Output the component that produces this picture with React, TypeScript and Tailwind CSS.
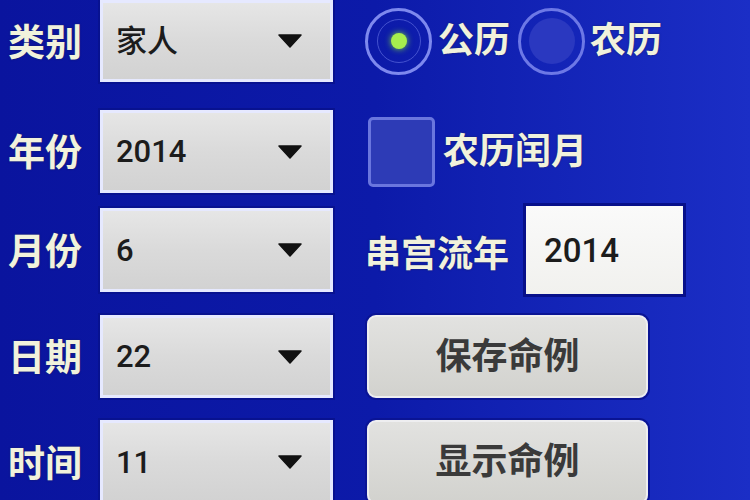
import React from 'react'

const cjk = { fontFamily: 'Roboto, "Noto Sans CJK SC", sans-serif' }

function Arrow() {
  return (
    <svg width="24" height="14" viewBox="0 0 24 14" className="shrink-0">
      <path d="M1 1 L23 1 L12 13 Z" fill="#111" stroke="#111" strokeWidth="1.5" strokeLinejoin="round" />
    </svg>
  )
}

function Spinner({ value }: { value: string }) {
  return (
    <div className="w-[233px] h-full flex items-center justify-between pl-[13px] pr-[28px] border-[3px] border-[#e6e9ff] bg-gradient-to-b from-[#e6e6e6] via-[#dadada] to-[#d2d2d2] shadow-[0_0_0_2px_#081290]">
      <span className="text-[31px] font-medium text-[#1c1c1c] leading-none" style={cjk}>{value}</span>
      <Arrow />
    </div>
  )
}

function Label({ text }: { text: string }) {
  return (
    <div className="w-[100px] pl-[8px] pt-[4px] text-[37px] font-bold text-[#f1f2dc] leading-none [text-shadow:0_0_2px_#1a2060]" style={cjk}>
      {text}
    </div>
  )
}

function Btn({ text }: { text: string }) {
  return (
    <div className="ml-[34px] w-[281px] h-full flex items-center justify-center rounded-[9px] border-2 border-[#eeeef0] bg-gradient-to-b from-[#e2e2e0] to-[#d2d2ce] shadow-[0_0_0_2px_#0a1494]">
      <span className="text-[36px] font-bold text-[#3a3a3a] leading-none" style={cjk}>{text}</span>
    </div>
  )
}

const lightText = 'text-[36px] font-bold text-[#f1f2dc] leading-none [text-shadow:0_0_2px_#1a2060]'

export default function App() {
  return (
    <div className="w-[750px] h-[500px] overflow-hidden bg-gradient-to-r from-[#0a149e] via-[#0c1aa9] to-[#1b2ec6]">
      {/* row 1 */}
      <div className="h-[82px] flex items-center">
        <Label text="类别" />
        <Spinner value="家人" />
        <div className="ml-[32px] flex items-center">
          <div className="w-[67px] h-[67px] rounded-full border-[3px] border-[#7e89ee] flex items-center justify-center">
            <div className="w-[44px] h-[44px] rounded-full border border-[#4452cf] flex items-center justify-center">
              <div className="w-[16px] h-[16px] rounded-full bg-[#a6ee4e] shadow-[0_0_6px_#7fd83a]" />
            </div>
          </div>
          <span className={`ml-[6px] ${lightText}`} style={cjk}>公历</span>
          <div className="ml-[8px] w-[67px] h-[67px] rounded-full border-[3px] border-[#6d78e6] flex items-center justify-center">
            <div className="w-[46px] h-[46px] rounded-full bg-[#2a38c0]" />
          </div>
          <span className={`ml-[5px] ${lightText}`} style={cjk}>农历</span>
        </div>
      </div>

      {/* row 2 */}
      <div className="mt-[28px] h-[83px] flex items-center">
        <Label text="年份" />
        <Spinner value="2014" />
        <div className="ml-[35px] flex items-center">
          <div className="w-[67px] h-[70px] rounded-[5px] border-[3px] border-[#6a76de] bg-[#2d3bb6]" />
          <span className={`ml-[8px] ${lightText}`} style={cjk}>农历闰月</span>
        </div>
      </div>

      {/* row 3 */}
      <div className="mt-[15px] h-[84px] flex items-center">
        <Label text="月份" />
        <Spinner value="6" />
        <div className="ml-[32px] flex items-center">
          <span className={`mt-[10px] ${lightText}`} style={cjk}>串宫流年</span>
          <div className="ml-[17px] w-[157px] h-[88px] flex items-center pl-[18px] bg-gradient-to-b from-[#fafafa] to-[#f1f1ee] shadow-[0_0_0_3px_#07108a]">
            <span className="text-[33px] font-medium text-[#1c1c1c] leading-none" style={cjk}>2014</span>
          </div>
        </div>
      </div>

      {/* row 4 */}
      <div className="mt-[23px] h-[83px] flex items-center">
        <Label text="日期" />
        <Spinner value="22" />
        <Btn text="保存命例" />
      </div>

      {/* row 5 */}
      <div className="mt-[22px] h-[84px] flex items-center">
        <Label text="时间" />
        <Spinner value="11" />
        <Btn text="显示命例" />
      </div>
    </div>
  )
}
